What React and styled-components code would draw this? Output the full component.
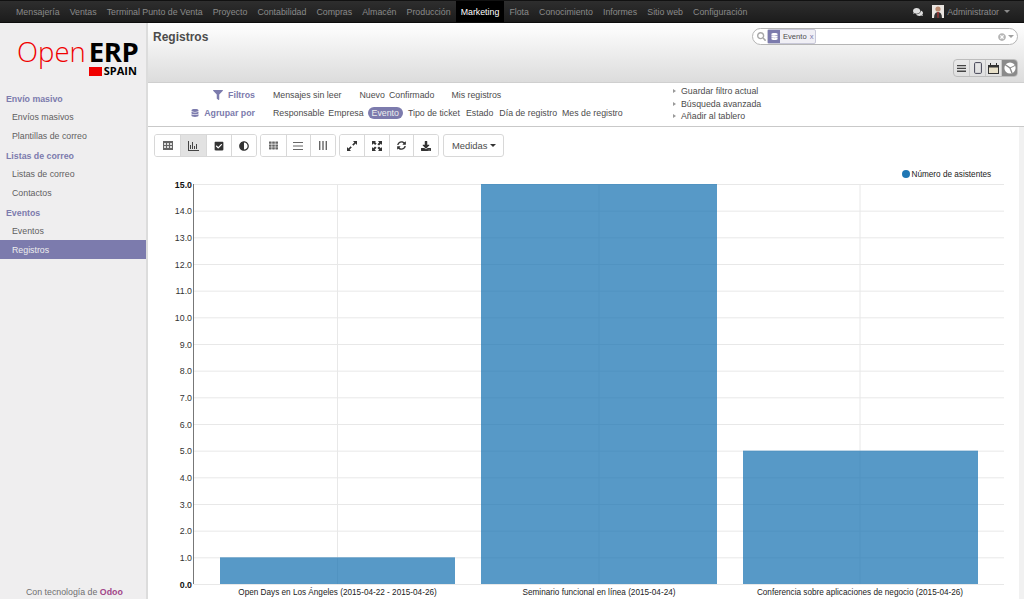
import React from 'react';
import styled, { createGlobalStyle } from 'styled-components';
import { FaFilter, FaDatabase, FaCheckSquare, FaAdjust, FaTh, FaDownload, FaSyncAlt, FaComments, FaSearch, FaTimesCircle } from 'react-icons/fa';

const GlobalStyle = createGlobalStyle`
  html, body {
    margin: 0;
    padding: 0;
    height: 100%;
    overflow: hidden;
    background: #fff;
    font-family: "Liberation Sans", Arial, sans-serif;
    font-size: 8.8px;
    color: #4c4c4c;
  }
`;

const Page = styled.div`
  display: flex;
  flex-direction: column;
  width: 1024px;
  height: 599px;
  overflow: hidden;
`;

const TopBar = styled.div`
  display: flex;
  align-items: center;
  justify-content: space-between;
  height: 23px;
  flex: none;
  padding: 0 0 0 11px;
  box-sizing: border-box;
  background: linear-gradient(#2e2e2e, #1c1c1c);
  border-top: 1px solid #111;
  border-bottom: 1px solid #0d0d0d;
`;

const Nav = styled.div`
  display: flex;
  height: 100%;
`;

const NavLink = styled.a`
  display: flex;
  align-items: center;
  padding: 0 5.05px;
  color: ${p => (p.$active ? '#fff' : '#8a8a8a')};
  background: ${p => (p.$active ? '#000' : 'transparent')};
  white-space: nowrap;
`;

const UserBox = styled.div`
  display: flex;
  align-items: center;
  color: #8a8a8a;
  padding-right: 14px;
`;

const Avatar = styled.svg`
  width: 12px;
  height: 13px;
  margin: 0 3px 0 9px;
`;

const Caret = styled.span`
  display: inline-block;
  margin-left: ${p => p.$gap ?? 5}px;
  border-left: 3px solid transparent;
  border-right: 3px solid transparent;
  border-top: 3px solid ${p => p.$color || '#8a8a8a'};
`;

const Body = styled.div`
  flex: 1;
  display: flex;
  min-height: 0;
`;

const Sidebar = styled.div`
  width: 148px;
  flex: none;
  box-sizing: border-box;
  display: flex;
  flex-direction: column;
  background: #efeeef;
  border-right: 2px solid #dcdcdc;
`;

const Logo = styled.div`
  height: 65px;
  padding: 15px 0 0 17px;
  box-sizing: border-box;
  display: flex;
  font-family: "Open Sans", sans-serif;
  flex: none;
`;

const LogoOpen = styled.span`
  color: #f00000;
  font-size: 27.5px;
  line-height: 28px;
  font-weight: 300;
`;

const LogoRight = styled.div`
  display: flex;
  flex-direction: column;
  margin-left: 3px;
`;

const LogoErp = styled.span`
  color: #000;
  font-size: 27.5px;
  line-height: 28px;
  font-weight: 700;
  letter-spacing: -0.4px;
`;

const LogoBottom = styled.div`
  display: flex;
  align-items: center;
  height: 10px;
`;

const LogoSquare = styled.span`
  width: 13px;
  height: 9px;
  background: #f00000;
  margin-right: 2px;
`;

const LogoSpain = styled.span`
  color: #000;
  font-size: 11px;
  font-weight: 700;
  line-height: 10px;
`;

const MenuSection = styled.div`
  height: 16px;
  margin-top: 3px;
  padding-left: 6px;
  display: flex;
  align-items: center;
  font-weight: 700;
  color: #7c7bad;
`;

const MenuItem = styled.div`
  height: 19px;
  padding-left: 12px;
  display: flex;
  align-items: center;
  color: ${p => (p.$active ? '#eee' : '#5f5f5f')};
  background: ${p => (p.$active ? '#7c7bad' : 'transparent')};
`;

const SideFooter = styled.div`
  margin-top: auto;
  padding: 0 0 1px 26px;
  color: #6f6f6f;
  line-height: 12px;
`;

const OdooName = styled.b`
  color: #a24689;
`;

const Main = styled.div`
  flex: 1;
  display: flex;
  flex-direction: column;
  min-width: 0;
`;

const Header = styled.div`
  height: 60px;
  flex: none;
  box-sizing: border-box;
  display: flex;
  justify-content: space-between;
  padding: 5px 6px 0 5px;
  background: linear-gradient(#fff, #dcdcdc);
  border-bottom: 1px solid #cfcfcf;
`;

const Title = styled.div`
  font-size: 12px;
  font-weight: 700;
  color: #4c4c4c;
  line-height: 15px;
  margin-top: 2px;
`;

const HeaderRight = styled.div`
  display: flex;
  flex-direction: column;
  align-items: flex-end;
`;

const SearchBox = styled.div`
  width: 266px;
  height: 17px;
  box-sizing: border-box;
  display: flex;
  align-items: center;
  padding: 0 3px 0 4px;
  background: #fff;
  border: 1px solid #b5b5b5;
  border-radius: 9px;
  color: #a8a8a8;
`;

const Facet = styled.div`
  display: flex;
  align-items: center;
  height: 13px;
  margin-left: 1px;
  background: #f0eff5;
  border: 1px solid #c8c8d8;
  border-radius: 2px;
  color: #4c4c4c;
  font-size: 7.6px;
`;

const FacetIcon = styled.span`
  display: flex;
  align-items: center;
  justify-content: center;
  width: 12px;
  height: 13px;
  background: #7c7bad;
  color: #fff;
  margin-right: 3px;
`;

const FacetClose = styled.span`
  color: #7c7bad;
  margin: 0 2px 0 3px;
`;

const SearchEnd = styled.div`
  margin-left: auto;
  display: flex;
  align-items: center;
`;

const ViewSwitch = styled.div`
  display: flex;
  margin-top: 14px;
  height: 16px;
  border: 1px solid #bdbdbd;
  border-radius: 4px;
  overflow: hidden;
`;

const ViewButton = styled.div`
  width: 15px;
  display: flex;
  align-items: center;
  justify-content: center;
  color: #444;
  background: ${p => (p.$active ? '#8a8a8a' : 'transparent')};
  & + & { border-left: 1px solid #c8c8c8; }
`;

const Drawer = styled.div`
  height: 44px;
  flex: none;
  box-sizing: border-box;
  display: flex;
  padding-top: 2px;
  background: #fff;
  border-bottom: 1px solid #c9c9c9;
`;

const DrawerRows = styled.div`
  width: 525px;
  padding-top: 1px;
  display: flex;
  flex-direction: column;
`;

const DrawerRow = styled.div`
  display: flex;
  align-items: center;
  height: 18px;
`;

const DrawerLabel = styled.div`
  width: 107px;
  display: flex;
  justify-content: flex-end;
  align-items: center;
  gap: 5px;
  margin-right: 18px;
  color: #7c7bad;
  font-weight: 700;
`;

const Option = styled.span`
  color: #4c4c4c;
  white-space: nowrap;
  margin-right: ${p => p.$gap ?? 5}px;
`;

const SelectedOption = styled.span`
  color: #eee;
  background: #7c7bad;
  border-radius: 7px;
  padding: 0 4px;
  line-height: 12px;
  margin: 0 5px 0 0;
  white-space: nowrap;
`;

const Extras = styled.div`
  display: flex;
  flex-direction: column;
`;

const ExtraItem = styled.div`
  display: flex;
  align-items: center;
  height: 12.5px;
  color: #4c4c4c;
  &::before {
    content: '';
    margin-right: 5px;
    border-left: 3px solid #999;
    border-top: 2px solid transparent;
    border-bottom: 2px solid transparent;
  }
`;

const Content = styled.div`
  flex: 1;
  min-height: 0;
  display: flex;
  flex-direction: column;
  border-right: 5px solid #f1f1f1;
`;

const Toolbar = styled.div`
  flex: none;
  display: flex;
  gap: 3px;
  padding: 7px 0 0 6px;
`;

const BtnGroup = styled.div`
  display: flex;
  height: 23px;
  box-sizing: border-box;
  border: 1px solid #d8d8d8;
  border-radius: 3px;
  overflow: hidden;
`;

const ToolBtn = styled.div`
  box-sizing: border-box;
  width: ${p => p.$w || 25}px;
  display: flex;
  align-items: center;
  justify-content: center;
  color: #333;
  background: ${p => (p.$active ? '#e2e2e2' : '#fff')};
  & + & { border-left: 1px solid #d8d8d8; }
`;

const MeasureBtn = styled(BtnGroup)`
  align-items: center;
  margin-left: 1px;
  padding: 0 7px 0 8px;
  color: #4c4c4c;
  font-size: 9.4px;
`;

const ChartArea = styled.div`
  flex: 1;
  min-height: 0;
`;

const ChartSvg = styled.svg`
  display: block;
  font-family: "Liberation Sans", Arial, sans-serif;
`;

const TableIcon = () => (
  <svg width="10" height="9" viewBox="0 0 10 9">
    <path d="M0 0h10v9H0z" fill="#666" />
    <path d="M1 2h2v2H1zM4 2h2v2H4zM7 2h2v2H7zM1 5h2v2H1zM4 5h2v2H4zM7 5h2v2H7z" fill="#ddd" />
  </svg>
);

const BarsIcon = () => (
  <svg width="11" height="10" viewBox="0 0 11 10" fill="#444">
    <path d="M0 0h1v9h10v1H0zM2 4h1v4H2zM4 1h1v7H4zM6 5h1v3H6zM8 3h1v5H8z" />
  </svg>
);

const LinesIcon = () => (
  <svg width="10" height="8" viewBox="0 0 10 8" fill="#666">
    <path d="M0 0h10v1H0zM0 3.5h10v1H0zM0 7h10v1H0z" />
  </svg>
);

const ColumnsIcon = () => (
  <svg width="8" height="9" viewBox="0 0 8 9" fill="#666">
    <path d="M0 0h1.4v9H0zM3.3 0h1.4v9H3.3zM6.6 0H8v9H6.6z" />
  </svg>
);

const ResizeIcon = () => (
  <svg width="10" height="10" viewBox="0 0 10 10" fill="#333">
    <path d="M6 0h4v4L8.6 2.6 6.4 4.8 5.2 3.6l2.2-2.2zM4 10H0V6l1.4 1.4 2.2-2.2 1.2 1.2-2.2 2.2z" />
  </svg>
);

const FullscreenIcon = () => (
  <svg width="10" height="10" viewBox="0 0 10 10" fill="#333">
    <path d="M0 0h4L3 1l1.6 1.6-1.4 1.4L1.4 2.6 0 4zM10 0v4L8.8 2.8 7 4.6 5.4 3.2 7.2 1.4 6 0zM0 10V6l1.2 1.2L3 5.4l1.6 1.4-1.8 1.8L4 10zM10 10H6l1.2-1.2L5.4 7 7 5.4l1.8 1.8L10 6z" />
  </svg>
);

const ViewList = () => (
  <svg width="9" height="7" viewBox="0 0 9 7" fill="#444">
    <path d="M0 0h9v1.3H0zM0 2.8h9v1.3H0zM0 5.6h9V7H0z" />
  </svg>
);

const ViewKanban = () => (
  <svg width="8" height="12" viewBox="0 0 8 12" fill="none" stroke="#445">
    <rect x="0.6" y="0.6" width="6.8" height="10.8" rx="1" />
  </svg>
);

const ViewCalendar = () => (
  <svg width="11" height="11" viewBox="0 0 11 11">
    <path d="M0 2h2V0h1v2h5V0h1v2h2v9H0z" fill="#333" />
    <path d="M1 4.5h9V10H1z" fill="#e8e0c8" />
  </svg>
);

const ViewGraph = () => (
  <svg width="12" height="12" viewBox="0 0 12 12">
    <circle cx="6" cy="6" r="5.6" fill="#fff" />
    <path d="M6 6 L1 2.5 L6 6 L8 11 Z" stroke="#8a8a8a" strokeWidth="1.4" fill="#8a8a8a" />
    <path d="M6 6 L11 3.5" stroke="#8a8a8a" strokeWidth="1" />
  </svg>
);

const navItems = ['Mensajería', 'Ventas', 'Terminal Punto de Venta', 'Proyecto', 'Contabilidad', 'Compras', 'Almacén', 'Producción', 'Marketing', 'Flota', 'Conocimiento', 'Informes', 'Sitio web', 'Configuración'];

// coordinates are relative to the chart svg
const X0 = 45.5;
const X1 = 856;
const Y_TOP = 27;
const Y_BOTTOM = 427;
const yFor = v => Y_BOTTOM - ((Y_BOTTOM - Y_TOP) * v) / 15;

const bars = [
  { label: 'Open Days en Los Ángeles (2015-04-22 - 2015-04-26)', x: 72, w: 235, v: 1, center: 189.5 },
  { label: 'Seminario funcional en línea (2015-04-24)', x: 333, w: 236, v: 15, center: 451 },
  { label: 'Conferencia sobre aplicaciones de negocio (2015-04-26)', x: 595, w: 235, v: 5, center: 712 },
];

const ticks = Array.from({ length: 16 }, (_, i) => i);

const Chart = () => (
  <ChartSvg width="870" height="442" viewBox="0 0 870 442">
    {ticks.map(t => (
      <line key={t} x1={X0} x2={X1} y1={yFor(t) + 0.5} y2={yFor(t) + 0.5} stroke="#e8e8e8" />
    ))}
    {bars.map(b => (
      <line key={b.center} x1={b.center} x2={b.center} y1={Y_TOP} y2={Y_BOTTOM} stroke="#e8e8e8" />
    ))}
    {bars.map(b => (
      <rect key={b.x} x={b.x} y={yFor(b.v)} width={b.w} height={Y_BOTTOM - yFor(b.v)} fill="#1f77b4" fillOpacity="0.75" />
    ))}
    <line x1={X0} x2={X0} y1={Y_TOP} y2={Y_BOTTOM} stroke="#777" />
    {ticks.map(t => (
      <text
        key={t}
        x={X0 - 1.5}
        y={yFor(t) + 3.5}
        textAnchor="end"
        fontSize="8.8"
        fontWeight={t === 0 || t === 15 ? 700 : 400}
        fill={t === 0 || t === 15 ? '#111' : '#333'}
      >
        {t}.0
      </text>
    ))}
    {bars.map(b => (
      <text key={b.label} x={b.center} y="438" textAnchor="middle" fontSize="8.2" fill="#222">{b.label}</text>
    ))}
    <circle cx="758" cy="17" r="4" fill="#1f77b4" />
    <text x="763.5" y="20" fontSize="8.2" fill="#222">Número de asistentes</text>
  </ChartSvg>
);

export default function App() {
  return (
    <Page>
      <GlobalStyle />
      <TopBar>
        <Nav>
          {navItems.map(item => (
            <NavLink key={item} $active={item === 'Marketing'}>{item}</NavLink>
          ))}
        </Nav>
        <UserBox>
          <FaComments size={10} color="#ddd" />
          <Avatar viewBox="0 0 12 13">
            <rect width="12" height="13" fill="#e8e4e0" />
            <circle cx="6" cy="4" r="2.6" fill="#b98a70" />
            <path d="M2 13c0-4 1.5-6 4-6s4 2 4 6z" fill="#333" />
            <path d="M5.2 7h1.6L6.5 13h-1z" fill="#a33" />
          </Avatar>
          Administrator
          <Caret />
        </UserBox>
      </TopBar>
      <Body>
        <Sidebar>
          <Logo>
            <LogoOpen>Open</LogoOpen>
            <LogoRight>
              <LogoErp>ERP</LogoErp>
              <LogoBottom>
                <LogoSquare />
                <LogoSpain>SPAIN</LogoSpain>
              </LogoBottom>
            </LogoRight>
          </Logo>
          <MenuSection>Envío masivo</MenuSection>
          <MenuItem>Envíos masivos</MenuItem>
          <MenuItem>Plantillas de correo</MenuItem>
          <MenuSection>Listas de correo</MenuSection>
          <MenuItem>Listas de correo</MenuItem>
          <MenuItem>Contactos</MenuItem>
          <MenuSection>Eventos</MenuSection>
          <MenuItem>Eventos</MenuItem>
          <MenuItem $active>Registros</MenuItem>
          <SideFooter>Con tecnología de <OdooName>Odoo</OdooName></SideFooter>
        </Sidebar>
        <Main>
          <Header>
            <Title>Registros</Title>
            <HeaderRight>
              <SearchBox>
                <FaSearch size={9} />
                <Facet>
                  <FacetIcon><FaDatabase size={7} /></FacetIcon>
                  Evento
                  <FacetClose>x</FacetClose>
                </Facet>
                <SearchEnd>
                  <FaTimesCircle size={8} color="#b5b5b5" />
                  <Caret $color="#a0a0a0" $gap={2} />
                </SearchEnd>
              </SearchBox>
              <ViewSwitch>
                <ViewButton><ViewList /></ViewButton>
                <ViewButton><ViewKanban /></ViewButton>
                <ViewButton><ViewCalendar /></ViewButton>
                <ViewButton $active><ViewGraph /></ViewButton>
              </ViewSwitch>
            </HeaderRight>
          </Header>
          <Drawer>
            <DrawerRows>
              <DrawerRow>
                <DrawerLabel><FaFilter size={10} />Filtros</DrawerLabel>
                <Option $gap={18}>Mensajes sin leer</Option>
                <Option $gap={4}>Nuevo</Option>
                <Option $gap={17}>Confirmado</Option>
                <Option>Mis registros</Option>
              </DrawerRow>
              <DrawerRow>
                <DrawerLabel><FaDatabase size={8} />Agrupar por</DrawerLabel>
                <Option $gap={4}>Responsable</Option>
                <Option $gap={4}>Empresa</Option>
                <SelectedOption>Evento</SelectedOption>
                <Option $gap={6}>Tipo de ticket</Option>
                <Option $gap={6}>Estado</Option>
                <Option>Día de registro</Option>
                <Option>Mes de registro</Option>
              </DrawerRow>
            </DrawerRows>
            <Extras>
              <ExtraItem>Guardar filtro actual</ExtraItem>
              <ExtraItem>Búsqueda avanzada</ExtraItem>
              <ExtraItem>Añadir al tablero</ExtraItem>
            </Extras>
          </Drawer>
          <Content>
            <Toolbar>
              <BtnGroup>
                <ToolBtn><TableIcon /></ToolBtn>
                <ToolBtn $active $w={26}><BarsIcon /></ToolBtn>
                <ToolBtn><FaCheckSquare size={10} /></ToolBtn>
                <ToolBtn><FaAdjust size={10} /></ToolBtn>
              </BtnGroup>
              <BtnGroup>
                <ToolBtn $w={24.67}><FaTh size={9} color="#666" /></ToolBtn>
                <ToolBtn $w={24.67}><LinesIcon /></ToolBtn>
                <ToolBtn $w={24.67}><ColumnsIcon /></ToolBtn>
              </BtnGroup>
              <BtnGroup>
                <ToolBtn $w={24.5}><ResizeIcon /></ToolBtn>
                <ToolBtn $w={24.5}><FullscreenIcon /></ToolBtn>
                <ToolBtn $w={24.5}><FaSyncAlt size={9} /></ToolBtn>
                <ToolBtn $w={24.5}><FaDownload size={10} /></ToolBtn>
              </BtnGroup>
              <MeasureBtn>Medidas<Caret $color="#333" $gap={3} /></MeasureBtn>
            </Toolbar>
            <ChartArea><Chart /></ChartArea>
          </Content>
        </Main>
      </Body>
    </Page>
  );
}
